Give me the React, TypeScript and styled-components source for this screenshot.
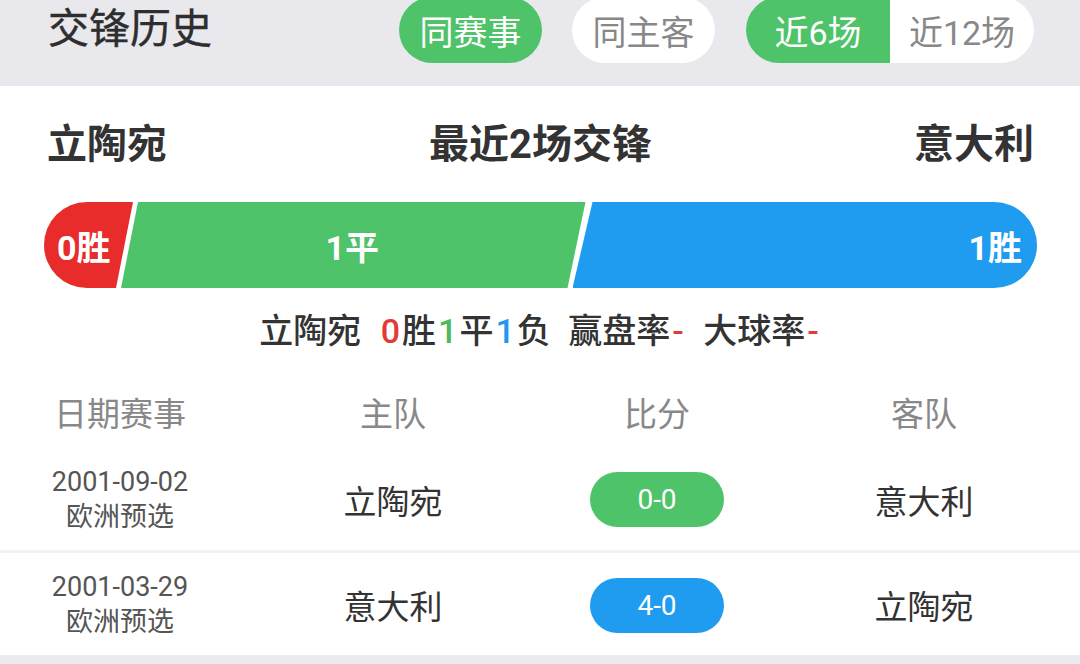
import React from "react";
import styled, { createGlobalStyle } from "styled-components";

const Global = createGlobalStyle`
  html, body { margin: 0; padding: 0; }
  body {
    background: #ececf0;
    font-family: "Roboto", "Noto Sans CJK SC", "Noto Sans", sans-serif;
    color: #333;
    width: 1080px;
    height: 664px;
    overflow: hidden;
  }
`;

const Header = styled.div`
  height: 86px;
  background: #e8e8ed;
  display: flex;
  align-items: flex-start;
  padding: 0 46px 0 48px;
  box-sizing: border-box;
`;

const Title = styled.div`
  font-size: 41px;
  font-weight: 400;
  line-height: 58px;
  color: #2e2e2e;
  flex: 1;
  -webkit-text-stroke: 0.4px #2e2e2e;
`;

const Pill = styled.div<{ $active?: boolean; $first?: boolean }>`
  width: 143px;
  height: 66px;
  margin-top: -3px;
  margin-left: ${(p) => (p.$first ? "0" : "30px")};
  border-radius: 33px;
  background: ${(p) => (p.$active ? "#4fc36a" : "#fff")};
  color: ${(p) => (p.$active ? "#fff" : "#888")};
  font-size: 34px;
  display: flex;
  align-items: center;
  justify-content: center;
`;

const Segment = styled.div`
  display: flex;
  margin-top: -3px;
  margin-left: 31px;
  height: 66px;
  border-radius: 33px;
  overflow: hidden;
`;

const SegItem = styled.div<{ $active?: boolean }>`
  width: 144px;
  background: ${(p) => (p.$active ? "#4fc36a" : "#fff")};
  color: ${(p) => (p.$active ? "#fff" : "#888")};
  font-size: 34px;
  display: flex;
  align-items: center;
  justify-content: center;
`;

const Card = styled.div`
  background: #fff;
  height: 569px;
  display: flex;
  flex-direction: column;
  overflow: hidden;
`;

const TeamsRow = styled.div`
  display: flex;
  justify-content: space-between;
  align-items: center;
  padding: 26px 46px 0 47px;
  height: 60px;
`;

const TeamName = styled.div<{ $align: string }>`
  font-size: 40px;
  font-weight: 700;
  color: #333;
  flex: 1;
  text-align: ${(p) => p.$align};
`;

const Bar = styled.div`
  display: flex;
  height: 86px;
  flex: none;
  margin: 32px 43px 0 44px;
  border-radius: 43px;
  overflow: hidden;
`;

const Seg = styled.div<{ $color: string; $clip: string; $overlap: number; $fixed?: number }>`
  background: ${(p) => p.$color};
  clip-path: ${(p) => p.$clip};
  margin-left: ${(p) => -p.$overlap}px;
  ${(p) => (p.$fixed ? `width: ${p.$fixed}px; flex: none;` : "flex: 1; min-width: 0;")}
  color: #fff;
  font-size: 34px;
  font-weight: 700;
  display: flex;
  align-items: center;
`;

const SegText = styled.span<{ $pos: string }>`
  flex: 1;
  text-align: ${(p) => p.$pos};
  padding: 0 15px 0 13px;
`;

const Stats = styled.div`
  margin-top: 18px;
  height: 50px;
  line-height: 50px;
  text-align: center;
  font-size: 34px;
  font-weight: 500;
  word-spacing: 9px;
  color: #333;
`;

const Num = styled.span<{ $c: string }>`
  color: ${(p) => p.$c};
  margin: 0 2px;
`;

const Grid = styled.div`
  display: grid;
  grid-template-columns: 240px 306px 222px 1fr;
  align-items: center;
`;

const HeadRow = styled(Grid)`
  margin-top: 19px;
  height: 74px;
  flex: none;
`;

const HeadCell = styled.div`
  font-size: 33px;
  color: #888;
  text-align: center;
`;

const Row = styled(Grid)<{ $h: number; $sep?: boolean }>`
  height: ${(p) => p.$h}px;
  flex: none;
  border-top: ${(p) => (p.$sep ? "3px solid #f2f2f4" : "none")};
`;

const DateCell = styled.div`
  text-align: center;
  font-size: 27px;
  line-height: 35px;
  color: #555;
`;

const TeamCell = styled.div`
  text-align: center;
  font-size: 33px;
  color: #333;
`;

const ScoreWrap = styled.div`
  display: flex;
  justify-content: center;
`;

const Score = styled.div<{ $bg: string }>`
  width: 134px;
  height: 55px;
  border-radius: 28px;
  background: ${(p) => p.$bg};
  color: #fff;
  font-size: 28px;
  display: flex;
  align-items: center;
  justify-content: center;
`;

const matches = [
  { date: "2001-09-02", comp: "欧洲预选", home: "立陶宛", score: "0-0", away: "意大利", color: "#4fc36a" },
  { date: "2001-03-29", comp: "欧洲预选", home: "意大利", score: "4-0", away: "立陶宛", color: "#1f9cf0" },
];

export default function App() {
  return (
    <>
      <Global />
      <Header>
        <Title>交锋历史</Title>
        <Pill $active $first>同赛事</Pill>
        <Pill>同主客</Pill>
        <Segment>
          <SegItem $active>近6场</SegItem>
          <SegItem>近12场</SegItem>
        </Segment>
      </Header>
      <Card>
        <TeamsRow>
          <TeamName $align="left">立陶宛</TeamName>
          <TeamName $align="center">最近2场交锋</TeamName>
          <TeamName $align="right">意大利</TeamName>
        </TeamsRow>
        <Bar>
          <Seg
            $color="#e82b2b"
            $overlap={0}
            $fixed={89}
            $clip="polygon(0 0, 100% 0, calc(100% - 17px) 100%, 0 100%)"
          >
            <SegText $pos="left">0胜</SegText>
          </Seg>
          <Seg
            $color="#4fc36a"
            $overlap={12}
            $clip="polygon(17px 0, 100% 0, calc(100% - 18px) 100%, 0 100%)"
          >
            <SegText $pos="center">1平</SegText>
          </Seg>
          <Seg
            $color="#1f9cf0"
            $overlap={13}
            $clip="polygon(20px 0, 100% 0, 100% 100%, 0 100%)"
          >
            <SegText $pos="right">1胜</SegText>
          </Seg>
        </Bar>
        <Stats>
          立陶宛 <Num $c="#e53935">0</Num>胜<Num $c="#4cba60">1</Num>平<Num $c="#2196f3">1</Num>负 赢盘率
          <Num $c="#e53935">-</Num> 大球率<Num $c="#e53935">-</Num>
        </Stats>
        <HeadRow>
          <HeadCell>日期赛事</HeadCell>
          <HeadCell>主队</HeadCell>
          <HeadCell>比分</HeadCell>
          <HeadCell>客队</HeadCell>
        </HeadRow>
        {matches.map((m, i) => (
          <Row key={m.date} $h={i === 0 ? 101 : 104} $sep={i > 0}>
            <DateCell>
              {m.date}
              <br />
              {m.comp}
            </DateCell>
            <TeamCell>{m.home}</TeamCell>
            <ScoreWrap>
              <Score $bg={m.color}>{m.score}</Score>
            </ScoreWrap>
            <TeamCell>{m.away}</TeamCell>
          </Row>
        ))}
      </Card>
    </>
  );
}
